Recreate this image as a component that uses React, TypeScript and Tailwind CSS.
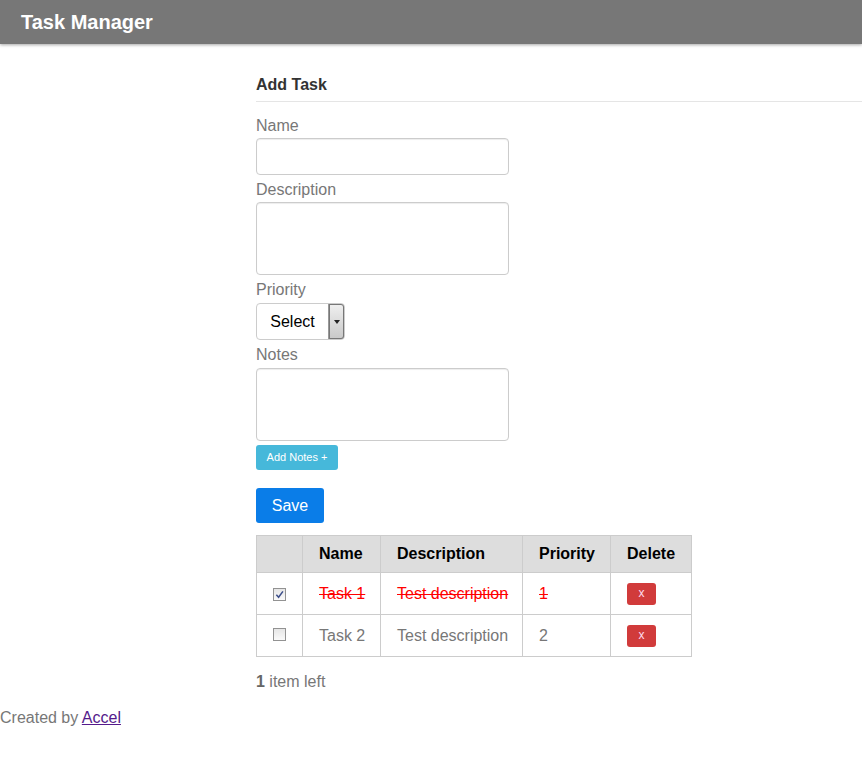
const tasks = [
  { id: 1, name: "Task 1", description: "Test description", priority: 1, done: true },
  { id: 2, name: "Task 2", description: "Test description", priority: 2, done: false },
];

function CheckBox({ checked }: { checked: boolean }) {
  return (
    <span className="inline-flex h-[13px] w-[13px] items-center justify-center border border-[#929292] bg-gradient-to-b from-[#e6e6e6] to-[#fafafa]">
      {checked && (
        <svg viewBox="0 0 10 10" className="h-[9px] w-[9px]">
          <path d="M1.5 5.2 L4 8 L8.8 1.5" fill="none" stroke="#3d4f8a" strokeWidth="1.7" />
        </svg>
      )}
    </span>
  );
}

function Label({ children }: { children: string }) {
  return <label className="mt-[6px] block text-[16px] leading-[18px] text-[#777]">{children}</label>;
}

export default function App() {
  const left = tasks.filter((t) => !t.done).length;

  return (
    <div className="min-h-[766px] bg-white font-['Liberation_Sans',Arial,sans-serif]">
      <header className="flex h-[44px] items-center bg-[#777] pl-[21px] shadow-[0_1px_3px_rgba(0,0,0,0.35)]">
        <h1 className="text-[20px] font-bold text-white">Task Manager</h1>
      </header>

      <main className="pl-[256px] pt-[31px]">
        <h2 className="border-b border-[#e5e5e5] pb-[6px] text-[16px] leading-[20px] font-bold text-[#333]">
          Add Task
        </h2>

        <div className="pt-[9px]">
          <Label>Name</Label>
          <input className="mt-[3px] block h-[37px] w-[253px] rounded-[4px] border border-[#ccc] shadow-[inset_0_1px_1px_rgba(0,0,0,0.075)]" />

          <Label>Description</Label>
          <textarea className="mt-[3px] block h-[73px] w-[253px] resize-none rounded-[4px] border border-[#ccc] shadow-[inset_0_1px_1px_rgba(0,0,0,0.075)]" />

          <Label>Priority</Label>
          <div className="mt-[4px] flex h-[37px] w-[89px] rounded-[4px] border border-[#ccc] bg-white">
            <span className="flex flex-1 items-center justify-center text-[16px] text-black">Select</span>
            <span className="flex w-[16px] items-center justify-center rounded-r-[3px] border-l border-[#999] bg-gradient-to-b from-[#f0f0f0] to-[#c8c8c8] shadow-[inset_0_0_0_1px_#777]">
              <svg viewBox="0 0 6 4" className="h-[4px] w-[6px]">
                <path d="M0 0 H6 L3 4 Z" fill="#222" />
              </svg>
            </span>
          </div>

          <Label>Notes</Label>
          <textarea className="mt-[4px] block h-[73px] w-[253px] resize-none rounded-[4px] border border-[#ccc] shadow-[inset_0_1px_1px_rgba(0,0,0,0.075)]" />

          <button className="mt-[4px] block h-[25px] w-[82px] rounded-[3px] bg-[#46b8da] text-[11px] text-white">
            Add Notes +
          </button>

          <button className="mt-[18px] block h-[35px] w-[68px] rounded-[3px] bg-[#0a7de8] text-[16px] text-white">
            Save
          </button>
        </div>

        <table className="mt-[12px] w-[436px] border-collapse border border-[#ccc] text-[16px]">
          <thead>
            <tr className="h-[37px] bg-[#ddd] text-left">
              <th className="w-[46px] border border-[#ccc]" />
              <th className="w-[78px] border border-[#ccc] pl-[16px] font-bold text-black">Name</th>
              <th className="w-[142px] border border-[#ccc] pl-[16px] font-bold text-black">Description</th>
              <th className="w-[88px] border border-[#ccc] pl-[16px] font-bold text-black">Priority</th>
              <th className="border border-[#ccc] pl-[16px] font-bold text-black">Delete</th>
            </tr>
          </thead>
          <tbody>
            {tasks.map((t) => {
              const text = t.done ? "text-[#f00] line-through" : "text-[#777]";
              return (
                <tr key={t.id} className="h-[42px]">
                  <td className="border border-[#ccc] text-center">
                    <span className="inline-flex pt-[3px]">
                      <CheckBox checked={t.done} />
                    </span>
                  </td>
                  <td className={`border border-[#ccc] pl-[16px] ${text}`}>{t.name}</td>
                  <td className={`border border-[#ccc] pl-[16px] ${text}`}>{t.description}</td>
                  <td className={`border border-[#ccc] pl-[16px] ${text}`}>{t.priority}</td>
                  <td className="border border-[#ccc] pl-[16px]">
                    <button className="flex h-[22px] w-[29px] items-center justify-center rounded-[3px] bg-[#d13b3b] pb-[1px] text-[12px] text-[#fde]">
                      x
                    </button>
                  </td>
                </tr>
              );
            })}
          </tbody>
        </table>

        <p className="mt-[13px] text-[16px] text-[#777]">
          <strong className="text-[#666]">{left}</strong> item left
        </p>
      </main>

      <footer className="mt-[12px] text-[16px] text-[#777]">
        Created by{" "}
        <a href="#" className="text-[#551a8b] underline">
          Accel
        </a>
      </footer>
    </div>
  );
}
